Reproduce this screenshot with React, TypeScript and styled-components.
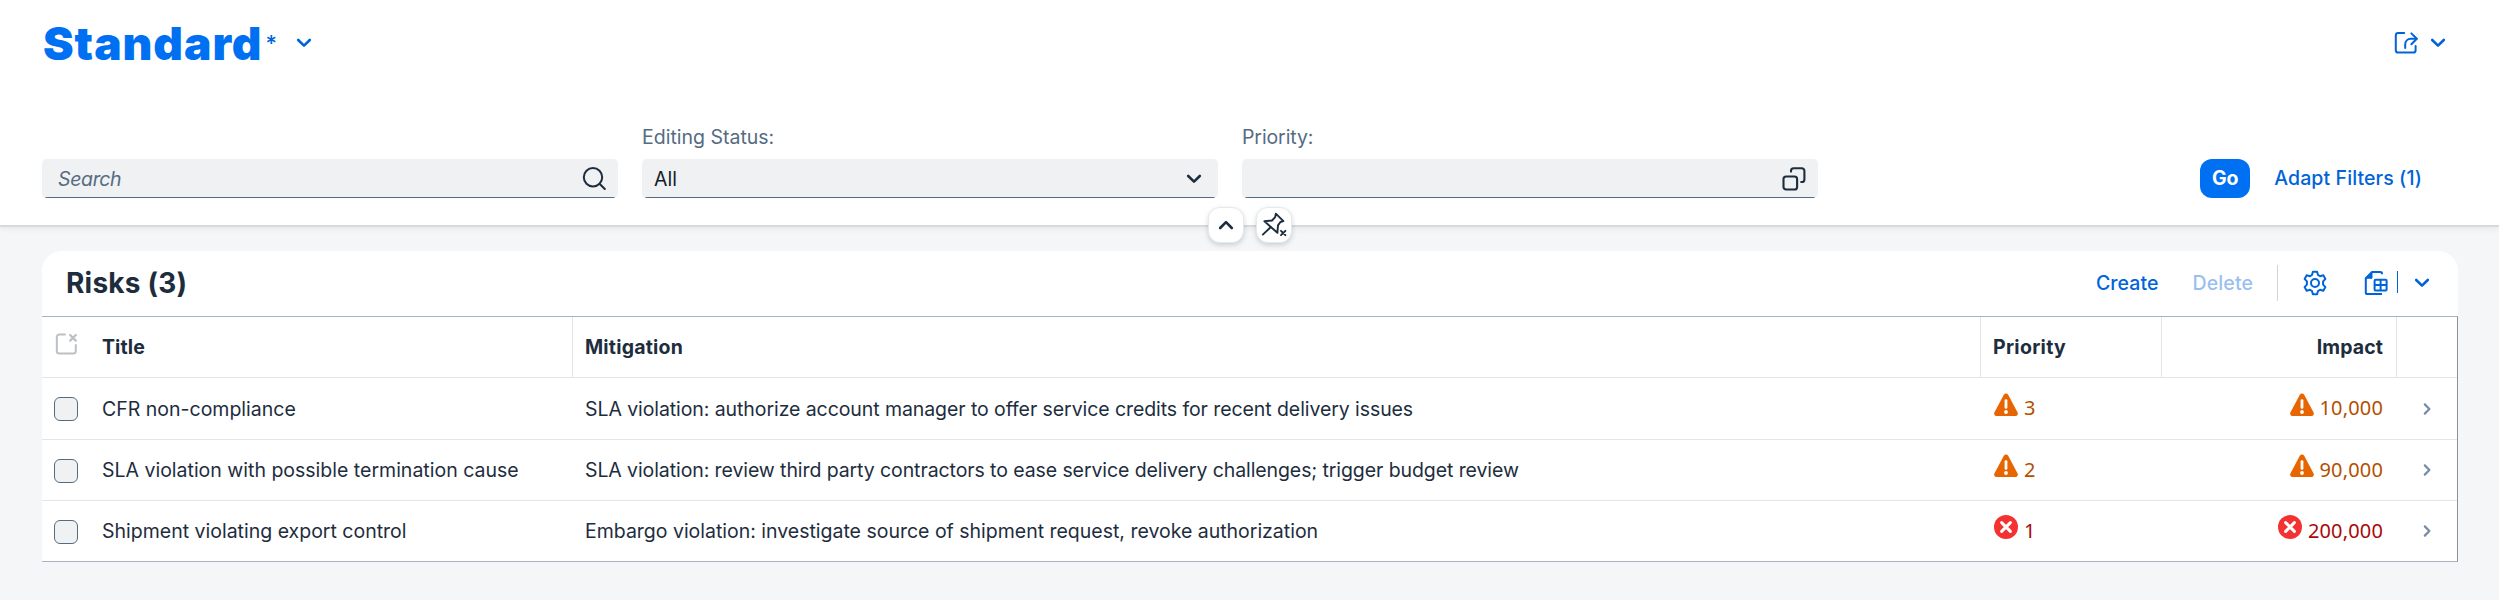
import React from 'react';
import styled, { createGlobalStyle } from 'styled-components';

const GlobalStyle = createGlobalStyle`
  * { box-sizing: border-box; }
  body {
    margin: 0;
    background: #f5f6f7;
    color: #1d2d3e;
    font-family: Inter, "Liberation Sans", sans-serif;
    font-size: 19.5px;
    line-height: 24px;
  }
  svg { display: block; flex: none; }
`;

const Page = styled.div`
  min-height: 600px;
  background: #f5f6f7;
`;

const Header = styled.header`
  position: relative;
  height: 227px;
  background: #fff;
  border-bottom: 2px solid #d9d9d9;
  box-shadow: 0 3px 4px rgba(85, 107, 129, 0.07);
  padding: 13px 42px 0;
`;

const TitleBar = styled.div`
  display: flex;
  align-items: center;
  height: 60px;
`;

const VariantTitle = styled.h1`
  margin: 0 0 0 1px;
  font-size: 46px;
  font-weight: 900;
  line-height: 60px;
  letter-spacing: 0.95px;
  color: #0070f2;
`;

const Modified = styled.span`
  width: 9px;
  margin: 0 21px 0 3px;
  font-size: 22px;
  font-weight: 500;
  color: #0064d9;
`;

const ShareButton = styled.div`
  display: flex;
  align-items: center;
  gap: 12px;
  margin: 0 11px 0 auto;
`;

const Filters = styled.div`
  display: grid;
  grid-template-columns: repeat(3, 576px) 1fr;
  column-gap: 24px;
  margin-top: 52px;
`;

const FilterItem = styled.div`
  display: flex;
  flex-direction: column;
`;

const Label = styled.label<{ $spacing: number }>`
  height: 34px;
  color: #556b82;
  letter-spacing: ${(p) => p.$spacing}px;
`;

const Field = styled.div<{ $left?: number; $right?: number }>`
  display: flex;
  align-items: center;
  justify-content: space-between;
  height: 39px;
  padding: 0 ${(p) => p.$right ?? 12}px 0 ${(p) => p.$left ?? 12}px;
  border-radius: 5px;
  background: linear-gradient(#556b82, #556b82) center bottom / calc(100% - 6px) 1px no-repeat #eff1f2;
`;

const Placeholder = styled.span`
  font-style: italic;
  color: #556b82;
  letter-spacing: -0.35px;
`;

const Value = styled.span`
  color: #131e29;
`;

const FilterActions = styled.div`
  display: flex;
  align-items: flex-end;
  justify-content: flex-end;
  gap: 24px;
  padding-right: 35px;
`;

const GoButton = styled.button`
  width: 50px;
  height: 39px;
  padding: 0 0 1px;
  border: 0;
  border-radius: 12px;
  background: #0070f2;
  color: #fff;
  font: 700 19.5px/37px Inter, sans-serif;
`;

const TextButton = styled.button<{ $disabled?: boolean; $spacing?: number }>`
  height: 39px;
  padding: 0 0 1px;
  border: 0;
  background: none;
  color: #0064d9;
  opacity: ${(p) => (p.$disabled ? 0.4 : 1)};
  font: 500 19.5px/38px Inter, sans-serif;
  letter-spacing: ${(p) => p.$spacing ?? 0.1}px;
  white-space: nowrap;
`;

const HeaderToggles = styled.div`
  position: absolute;
  left: 0;
  right: 0;
  bottom: -18px;
  display: flex;
  justify-content: center;
  gap: 12px;
  z-index: 1;
`;

const Toggle = styled.button`
  display: flex;
  align-items: center;
  justify-content: center;
  width: 36px;
  height: 36px;
  padding: 0;
  border: 1px solid #e6e9ec;
  border-radius: 12px;
  background: #fff;
  box-shadow: 0 2px 5px rgba(85, 107, 130, 0.28);
`;

const Card = styled.section`
  margin: 24px 41px 0 42px;
  background: #fff;
  border-radius: 20px 20px 0 0;
`;

const Toolbar = styled.div`
  display: flex;
  align-items: center;
  height: 65px;
  padding: 0 28px 1px 24px;
`;

const TableTitle = styled.h2`
  margin: 0 auto 0 0;
  font-size: 28px;
  font-weight: 700;
  line-height: 34px;
  letter-spacing: 0.2px;
`;

const ToolbarButtons = styled.div`
  display: flex;
  align-items: center;
`;

const Gap = styled.span<{ $w: number }>`
  width: ${(p) => p.$w}px;
`;

const Separator = styled.span<{ $blue?: boolean }>`
  width: 1px;
  height: ${(p) => (p.$blue ? 22 : 36)}px;
  margin-top: ${(p) => (p.$blue ? -2 : 0)}px;
  background: ${(p) => (p.$blue ? '#0064d9' : '#d0d4d8')};
`;

const Table = styled.div`
  border-top: 1px solid #a8b3bd;
  border-bottom: 1px solid #a8b3bd;
  border-right: 1px solid #8c9298;
`;

const Row = styled.div<{ $height: number; $last?: boolean }>`
  display: grid;
  grid-template-columns: 48px 483px 1408px 181px 235px 1fr;
  height: ${(p) => p.$height}px;
  border-bottom: ${(p) => (p.$last ? 0 : 1)}px solid #e5e5e5;
`;

const Cell = styled.div<{ $line?: boolean; $end?: boolean; $center?: boolean }>`
  display: flex;
  align-items: center;
  justify-content: ${(p) => (p.$end ? 'flex-end' : p.$center ? 'center' : 'flex-start')};
  padding: ${(p) => (p.$center ? 0 : p.$end ? (p.$line ? '0 13px 0 12px' : '0 14px 0 12px') : '0 12px')};
  border-right: ${(p) => (p.$line ? '1px solid #e5e5e5' : 0)};
  white-space: nowrap;
`;

const HeadText = styled.span<{ $spacing?: number }>`
  font-weight: 700;
  letter-spacing: ${(p) => p.$spacing ?? 0.1}px;
`;

const BodyText = styled.span<{ $spacing: number }>`
  letter-spacing: ${(p) => p.$spacing}px;
`;

const SelectAll = styled.span`
  margin: -6px 0 0 1px;
`;

const CheckBox = styled.span`
  flex: none;
  width: 24px;
  height: 24px;
  margin-top: 1px;
  border: 1px solid #556b82;
  border-radius: 6px;
  background: #eff1f2;
`;

const Status = styled.span<{ $error: boolean }>`
  display: flex;
  align-items: center;
  gap: 6px;
  margin-left: 1px;
  color: ${(p) => (p.$error ? '#aa0808' : '#b44f00')};
  font-family: "Noto Sans", sans-serif;
  font-size: 20px;
  letter-spacing: 0.15px;

  svg {
    margin-top: -8px;
  }

  span {
    margin-top: -1px;
  }
`;

type ChevronProps = { color: string; dir?: 'up' | 'down' };

const Chevron = ({ color, dir = 'down' }: ChevronProps) => (
  <svg width="16" height="12" viewBox="0 0 16 12" fill="none" stroke={color} strokeWidth="2.6" strokeLinecap="round" strokeLinejoin="round">
    <path d={dir === 'down' ? 'M2.200 3 8 8.600 13.800 3' : 'M2.200 9 8 3.200 13.800 9'} />
  </svg>
);

const SearchIcon = () => (
  <svg width="24" height="24" viewBox="0 0 24 24" fill="none" stroke="#1d2d3e" strokeWidth="2" strokeLinecap="round">
    <circle cx="11" cy="10.2" r="9.2" />
    <path d="m17.800 17 5 5" />
  </svg>
);

const ValueHelpIcon = () => (
  <svg width="24" height="24" viewBox="0 0 24 24" fill="none" stroke="#1d2d3e" strokeWidth="2.1" strokeLinecap="round" strokeLinejoin="round">
    <rect x="1.5" y="9.5" width="13.600" height="13" rx="2.6" />
    <path d="M9 4.600V3.800a2.600 2.600 0 0 1 2.600-2.600h8.200a2.600 2.600 0 0 1 2.600 2.600v8.600a2.600 2.600 0 0 1-2.600 2.600h-.6" />
  </svg>
);

const ShareIcon = () => (
  <svg width="24" height="24" viewBox="0 0 24 24" fill="none" stroke="#0064d9" strokeWidth="2" strokeLinecap="round" strokeLinejoin="round">
    <path d="M10.200 2H4.200A2.400 2.400 0 0 0 1.800 4.400v14.800a2.400 2.400 0 0 0 2.400 2.400h15a2.400 2.400 0 0 0 2.400-2.400V15" />
    <path d="M11.200 17v-3.400c0-3.400 2.400-5.800 5.600-5.800h5.800" />
    <path d="m17.400 2.400 5.400 5.400-5.400 5.400" />
  </svg>
);

const PinIcon = () => (
  <svg width="26" height="26" viewBox="0 0 26 26" fill="none" stroke="#1d2d3e" strokeWidth="1.9" strokeLinecap="round" strokeLinejoin="round">
    <path d="m14.800 1.600 7.600 7.600-3 .8-2.400 3.400-.6 7.400L3.400 9.200l7.600-.7 3.200-3.300z" />
    <path d="M9.600 15.200 1.800 22.600" />
    <path d="m20 18.800 4.400 4.400m0-4.400L20 23.200" />
  </svg>
);

const GearIcon = () => (
  <svg width="24" height="26" viewBox="0 0 24 26" fill="none" stroke="#0064d9" strokeWidth="2" strokeLinejoin="round">
    <path d="M9.900 1.800h4.200l.9 3.200 2 1.200 3.300-.9 2.100 3.600-2.300 2.500v3.200l2.300 2.500-2.100 3.600-3.300-.9-2 1.200-.9 3.200H9.900L9 21l-2-1.200-3.300.9-2.100-3.600 2.300-2.500v-3.200L1.600 8.900l2.100-3.600 3.300.9L9 5z" />
    <circle cx="12" cy="13" r="4" />
  </svg>
);

const ExportIcon = () => (
  <svg width="24" height="26" viewBox="0 0 24 26" fill="none" stroke="#0064d9" strokeWidth="2" strokeLinejoin="round">
    <path d="M18 4.200V3.600A1.600 1.600 0 0 0 16.400 2H8L1.800 8.200V22.400A1.600 1.600 0 0 0 3.400 24H18" />
    <path d="M8 2v6.200H1.800z" fill="#0064d9" strokeWidth="1" />
    <rect x="10.600" y="9.800" width="12" height="10.600" rx="1" />
    <path d="M10.600 15.100h12M16.600 9.800v10.600" />
  </svg>
);

const ClearSelectionIcon = () => (
  <svg width="22" height="22" viewBox="0 0 22 22" fill="none" stroke="#bbc0c5" strokeWidth="2" strokeLinecap="round">
    <path d="M10 1.400H4.400A2.600 2.600 0 0 0 1.800 4v14a2.600 2.600 0 0 0 2.600 2.600h13.800a2.600 2.600 0 0 0 2.600-2.600v-6" />
    <path d="m15.200 2 5.600 5.600m0-5.600-5.600 5.600" strokeWidth="2.200" />
  </svg>
);

const WarningIcon = () => (
  <svg width="24" height="24" viewBox="0 0 24 24">
    <path d="M9.800 1.700a2.500 2.500 0 0 1 4.400 0l9.400 17.900c.8 1.600-.2 3.400-2 3.400H2.400c-1.800 0-2.800-1.800-2-3.400z" fill="#e76500" />
    <path d="M12 7.600v6.800" stroke="#fff" strokeWidth="2.800" strokeLinecap="round" />
    <circle cx="12" cy="19" r="1.900" fill="#fff" />
  </svg>
);

const ErrorIcon = () => (
  <svg width="24" height="24" viewBox="0 0 24 24">
    <circle cx="12" cy="12" r="12" fill="#f53232" />
    <path d="m7.600 7.600 8.800 8.800m0-8.800-8.800 8.800" stroke="#fff" strokeWidth="3" strokeLinecap="round" />
  </svg>
);

const NavIcon = () => (
  <svg width="10" height="14" viewBox="0 0 10 14" fill="none" stroke="#758ca4" strokeWidth="2.200" strokeLinecap="round" strokeLinejoin="round">
    <path d="m2.800 2.400 4.600 4.600-4.600 4.600" />
  </svg>
);

type Risk = {
  title: string;
  mitigation: string;
  mitigationSpacing: number;
  priority: string;
  impact: string;
  error: boolean;
  height: number;
};

const risks: Risk[] = [
  {
    title: 'CFR non-compliance',
    mitigation: 'SLA violation: authorize account manager to offer service credits for recent delivery issues',
    mitigationSpacing: -0.08,
    priority: '3',
    impact: '10,000',
    error: false,
    height: 62,
  },
  {
    title: 'SLA violation with possible termination cause',
    mitigation: 'SLA violation: review third party contractors to ease service delivery challenges; trigger budget review',
    mitigationSpacing: -0.09,
    priority: '2',
    impact: '90,000',
    error: false,
    height: 61,
  },
  {
    title: 'Shipment violating export control',
    mitigation: 'Embargo violation: investigate source of shipment request, revoke authorization',
    mitigationSpacing: -0.01,
    priority: '1',
    impact: '200,000',
    error: true,
    height: 60,
  },
];

const StatusValue = ({ error, children }: { error: boolean; children: React.ReactNode }) => (
  <Status $error={error}>
    {error ? <ErrorIcon /> : <WarningIcon />}
    <span>{children}</span>
  </Status>
);

export default function App() {
  return (
    <Page>
      <GlobalStyle />
      <Header>
        <TitleBar>
          <VariantTitle>Standard</VariantTitle>
          <Modified>*</Modified>
          <Chevron color="#0064d9" />
          <ShareButton>
            <ShareIcon />
            <Chevron color="#0064d9" />
          </ShareButton>
        </TitleBar>
        <Filters>
          <FilterItem>
            <Label $spacing={0} />
            <Field $left={16}>
              <Placeholder>Search</Placeholder>
              <SearchIcon />
            </Field>
          </FilterItem>
          <FilterItem>
            <Label $spacing={0}>Editing Status:</Label>
            <Field $right={16}>
              <Value>All</Value>
              <Chevron color="#1d2d3e" />
            </Field>
          </FilterItem>
          <FilterItem>
            <Label $spacing={-0.1}>Priority:</Label>
            <Field>
              <Value />
              <ValueHelpIcon />
            </Field>
          </FilterItem>
          <FilterActions>
            <GoButton>Go</GoButton>
            <TextButton>Adapt Filters (1)</TextButton>
          </FilterActions>
        </Filters>
        <HeaderToggles>
          <Toggle>
            <Chevron color="#1d2d3e" dir="up" />
          </Toggle>
          <Toggle>
            <PinIcon />
          </Toggle>
        </HeaderToggles>
      </Header>
      <Card>
        <Toolbar>
          <TableTitle>Risks (3)</TableTitle>
          <ToolbarButtons>
            <TextButton>Create</TextButton>
            <Gap $w={34} />
            <TextButton $disabled>Delete</TextButton>
            <Gap $w={24} />
            <Separator />
            <Gap $w={25} />
            <GearIcon />
            <Gap $w={37} />
            <ExportIcon />
            <Gap $w={9} />
            <Separator $blue />
            <Gap $w={16} />
            <Chevron color="#0064d9" />
          </ToolbarButtons>
        </Toolbar>
        <Table>
          <Row $height={61}>
            <Cell>
              <SelectAll>
                <ClearSelectionIcon />
              </SelectAll>
            </Cell>
            <Cell $line>
              <HeadText>Title</HeadText>
            </Cell>
            <Cell $line>
              <HeadText $spacing={0.2}>Mitigation</HeadText>
            </Cell>
            <Cell $line>
              <HeadText $spacing={0.3}>Priority</HeadText>
            </Cell>
            <Cell $line $end>
              <HeadText>Impact</HeadText>
            </Cell>
            <Cell />
          </Row>
          {risks.map((r, i) => (
            <Row key={r.title} $height={r.height} $last={i === risks.length - 1}>
              <Cell>
                <CheckBox />
              </Cell>
              <Cell>
                <BodyText $spacing={0}>{r.title}</BodyText>
              </Cell>
              <Cell>
                <BodyText $spacing={r.mitigationSpacing}>{r.mitigation}</BodyText>
              </Cell>
              <Cell>
                <StatusValue error={r.error}>{r.priority}</StatusValue>
              </Cell>
              <Cell $end>
                <StatusValue error={r.error}>{r.impact}</StatusValue>
              </Cell>
              <Cell $center>
                <NavIcon />
              </Cell>
            </Row>
          ))}
        </Table>
      </Card>
    </Page>
  );
}
